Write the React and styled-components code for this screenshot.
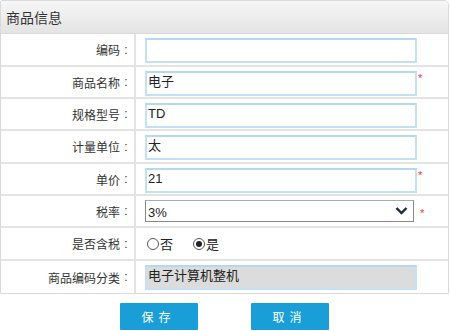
import styled, { createGlobalStyle } from 'styled-components';

const Global = createGlobalStyle`
    body {
        margin: 0;
        background: #fff;
        font-family: Arial, "Liberation Sans", "Noto Sans CJK SC", sans-serif;
        font-size: 12px;
        color: #333;
    }
`;

const Panel = styled.div`
    width: 447px;
    border: 1px solid #d9d9d9;
    border-top-right-radius: 5px;
    border-top-left-radius: 2px;
`;

const Header = styled.div`
    height: 32px;
    display: flex;
    align-items: center;
    padding-left: 5px;
    font-size: 14px;
    color: #333;
    background: linear-gradient(#f6f6f6, #e4e4e4);
    border-bottom: 1px solid #d9d9d9;
    border-top-right-radius: 5px;
`;

const Row = styled.div`
    display: grid;
    grid-template-columns: 135px 1fr;
    height: ${p => p.$h}px;
    border-bottom: ${p => (p.$last ? 'none' : '2px solid #e3e3e3')};
    box-sizing: border-box;
`;

const Label = styled.div`
    border-right: 2px solid #e3e3e3;
    display: flex;
    align-items: center;
    justify-content: flex-end;
    padding-right: 2px;
    color: #333;
    font-size: 12px;
`;

const Colon = styled.span`
    display: inline-block;
    width: 12px;
    text-align: center;
`;

const Field = styled.div`
    display: flex;
    align-items: ${p => (p.$center ? 'center' : 'flex-start')};
    padding-left: 9px;
    padding-top: ${p => (p.$center ? 0 : 4)}px;
`;

const Input = styled.div`
    width: 272px;
    height: 25px;
    box-sizing: border-box;
    border: 2px solid #c4e0f4;
    border-top-color: #b5d8f1;
    background: ${p => (p.$disabled ? '#dcdcdc' : '#fff')};
    padding: 1px 0 0 1px;
    font-size: 13px;
    line-height: 15px;
    color: #222;
`;

const Star = styled.span`
    color: #f33;
    font-size: 11px;
    margin-left: 1px;
    margin-top: ${p => p.$top}px;
    line-height: 11px;
`;

const Select = styled.div`
    width: 269px;
    height: 22px;
    box-sizing: border-box;
    border: 1px solid #888;
    border-top-color: #aaa;
    display: flex;
    align-items: flex-end;
    justify-content: space-between;
    padding: 0 5px 1px 2px;
    font-size: 13px;
    color: #222;
    svg {
        align-self: center;
    }
`;

const Radios = styled.div`
    display: flex;
    gap: 20px;
    padding-left: 2px;
    font-size: 13px;
    color: #222;
`;

const RadioItem = styled.label`
    display: flex;
    align-items: center;
    gap: 1px;
`;

const Dot = styled.span`
    width: 10px;
    height: 10px;
    border: 1px solid #555;
    border-radius: 50%;
    display: flex;
    align-items: center;
    justify-content: center;
    &::after {
        content: '';
        width: 6px;
        height: 6px;
        border-radius: 50%;
        background: ${p => (p.$on ? '#222' : 'transparent')};
    }
`;

const Actions = styled.div`
    display: flex;
    gap: 53px;
    padding: 9px 0 0 120px;
`;

const Button = styled.button`
    width: 78px;
    height: 27px;
    border: none;
    background: #1a9ed7;
    color: #fff;
    font-family: inherit;
    font-size: 12px;
    letter-spacing: 5px;
    padding-left: 5px;
    border-radius: 1px;
`;

function Chevron() {
    return (
        <svg width="13" height="9" viewBox="0 0 13 9">
            <path d="M1.5 2 L6.5 7 L11.5 2" fill="none" stroke="#1f2a3a" strokeWidth="2.4" />
        </svg>
    );
}

const rows = [
    { label: '编码', value: '', h: 33 },
    { label: '商品名称', value: '电子', h: 32, star: true },
    { label: '规格型号', value: 'TD', h: 32 },
    { label: '计量单位', value: '太', h: 33 },
    { label: '单价', value: '21', h: 32, star: true },
];

export default function App() {
    return (
        <>
            <Global />
            <Panel>
                <Header>商品信息</Header>
                {rows.map(r => (
                    <Row key={r.label} $h={r.h}>
                        <Label>{r.label}<Colon>:</Colon></Label>
                        <Field>
                            <Input>{r.value}</Input>
                            {r.star ? <Star $top={2}>*</Star> : null}
                        </Field>
                    </Row>
                ))}
                <Row $h={32}>
                    <Label>税率<Colon>:</Colon></Label>
                    <Field $center>
                        <Select>
                            <span>3%</span>
                            <Chevron />
                        </Select>
                        <Star $top={4} style={{ marginLeft: 6 }}>*</Star>
                    </Field>
                </Row>
                <Row $h={33}>
                    <Label>是否含税<Colon>:</Colon></Label>
                    <Field $center>
                        <Radios>
                            <RadioItem><Dot />否</RadioItem>
                            <RadioItem><Dot $on />是</RadioItem>
                        </Radios>
                    </Field>
                </Row>
                <Row $h={32} $last>
                    <Label>商品编码分类<Colon>:</Colon></Label>
                    <Field>
                        <Input $disabled>电子计算机整机</Input>
                    </Field>
                </Row>
            </Panel>
            <Actions>
                <Button>保存</Button>
                <Button>取消</Button>
            </Actions>
        </>
    );
}
